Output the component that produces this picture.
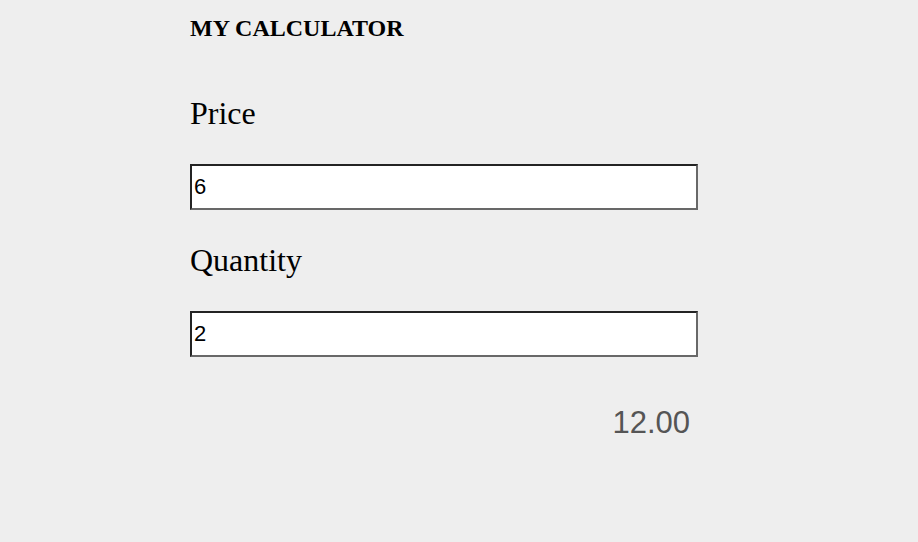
import React, { useState } from "react";

export default function App() {
  const [price, setPrice] = useState("6");
  const [qty, setQty] = useState("2");
  const total = ((parseFloat(price) || 0) * (parseFloat(qty) || 0)).toFixed(2);
  const serif = "font-['Liberation_Serif','Times_New_Roman',serif]";
  const inputCls =
    "block w-[508px] h-[46px] bg-white border-2 border-t-[#232323] border-l-[#232323] border-b-[#686868] border-r-[#686868] px-[2px] text-[22px] text-black font-['Liberation_Sans',Arial,sans-serif] outline-none";
  return (
    <div className="min-h-[542px] w-full bg-[#eeeeee]">
      <div className="ml-[190px] w-[508px] pt-[14px]">
        <div className={`${serif} font-bold text-[24px] leading-[28px] text-black`}>MY CALCULATOR</div>
        <div className={`${serif} text-[32px] leading-[36px] text-black mt-[53px]`}>Price</div>
        <input className={`${inputCls} mt-[33px]`} value={price} onChange={(e) => setPrice(e.target.value)} />
        <div className={`${serif} text-[32px] leading-[36px] text-black mt-[32px]`}>Quantity</div>
        <input className={`${inputCls} mt-[33px]`} value={qty} onChange={(e) => setQty(e.target.value)} />
        <div className="mt-[48px] pr-[8px] text-right font-['Liberation_Sans',Arial,sans-serif] text-[31px] leading-[36px] text-[#555555]">
          {total}
        </div>
      </div>
    </div>
  );
}
